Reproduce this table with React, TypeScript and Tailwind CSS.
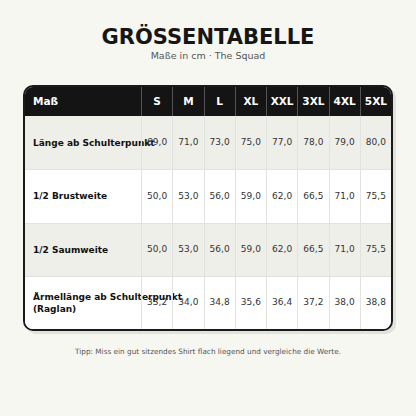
import React from "react";

const sizes = ["S", "M", "L", "XL", "XXL", "3XL", "4XL", "5XL"];
const rows: { label: React.ReactNode; values: string[]; bg: string }[] = [
  { label: "Länge ab Schulterpunkt", values: ["69,0", "71,0", "73,0", "75,0", "77,0", "78,0", "79,0", "80,0"], bg: "bg-[#efefea]" },
  { label: "1/2 Brustweite", values: ["50,0", "53,0", "56,0", "59,0", "62,0", "66,5", "71,0", "75,5"], bg: "bg-white" },
  { label: "1/2 Saumweite", values: ["50,0", "53,0", "56,0", "59,0", "62,0", "66,5", "71,0", "75,5"], bg: "bg-[#efefea]" },
  {
    label: (
      <>
        Ärmellänge ab Schulterpunkt
        <br />
        (Raglan)
      </>
    ),
    values: ["33,2", "34,0", "34,8", "35,6", "36,4", "37,2", "38,0", "38,8"],
    bg: "bg-white",
  },
];

export default function App() {
  return (
    <div
      className="w-[416px] h-[416px] bg-[#f7f7f2] flex flex-col items-center"
      style={{ fontFamily: '"DejaVu Sans", Verdana, sans-serif' }}
    >
      <div className="pt-[24px] text-[21px] font-bold leading-[26px] text-[#161616]">GRÖSSENTABELLE</div>
      <div className="mt-[0px] text-[9.5px] leading-[12px] text-[#555]">Maße in cm · The Squad</div>
      <div className="mt-[23px] w-[370px] border-2 border-[#1a1a1a] rounded-[10px] overflow-hidden shadow-[3px_3px_0_#e2e2dc] bg-white">
        <div className="grid grid-cols-[116px_repeat(8,1fr)] h-[29px] bg-[#141414] text-white font-bold text-[10.5px]">
          <div className="flex items-center pl-[8px]">Maß</div>
          {sizes.map((s) => (
            <div key={s} className="flex items-center justify-center border-l border-[#555]">
              {s}
            </div>
          ))}
        </div>
        {rows.map((r, i) => (
          <div
            key={i}
            className={`grid grid-cols-[116px_repeat(8,1fr)] h-[53.3px] ${r.bg} ${i > 0 ? "border-t border-[#e2e2de]" : ""}`}
          >
            <div className="flex items-center pl-[8px] font-bold text-[9px] leading-[12px] text-[#111] whitespace-nowrap">
              <div>{r.label}</div>
            </div>
            {r.values.map((v, j) => (
              <div key={j} className="flex items-center justify-center border-l border-[#e2e2de] text-[9px] text-[#333]">
                {v}
              </div>
            ))}
          </div>
        ))}
      </div>
      <div className="mt-[16px] text-[7.3px] leading-[10px] text-[#555]">
        Tipp: Miss ein gut sitzendes Shirt flach liegend und vergleiche die Werte.
      </div>
    </div>
  );
}
